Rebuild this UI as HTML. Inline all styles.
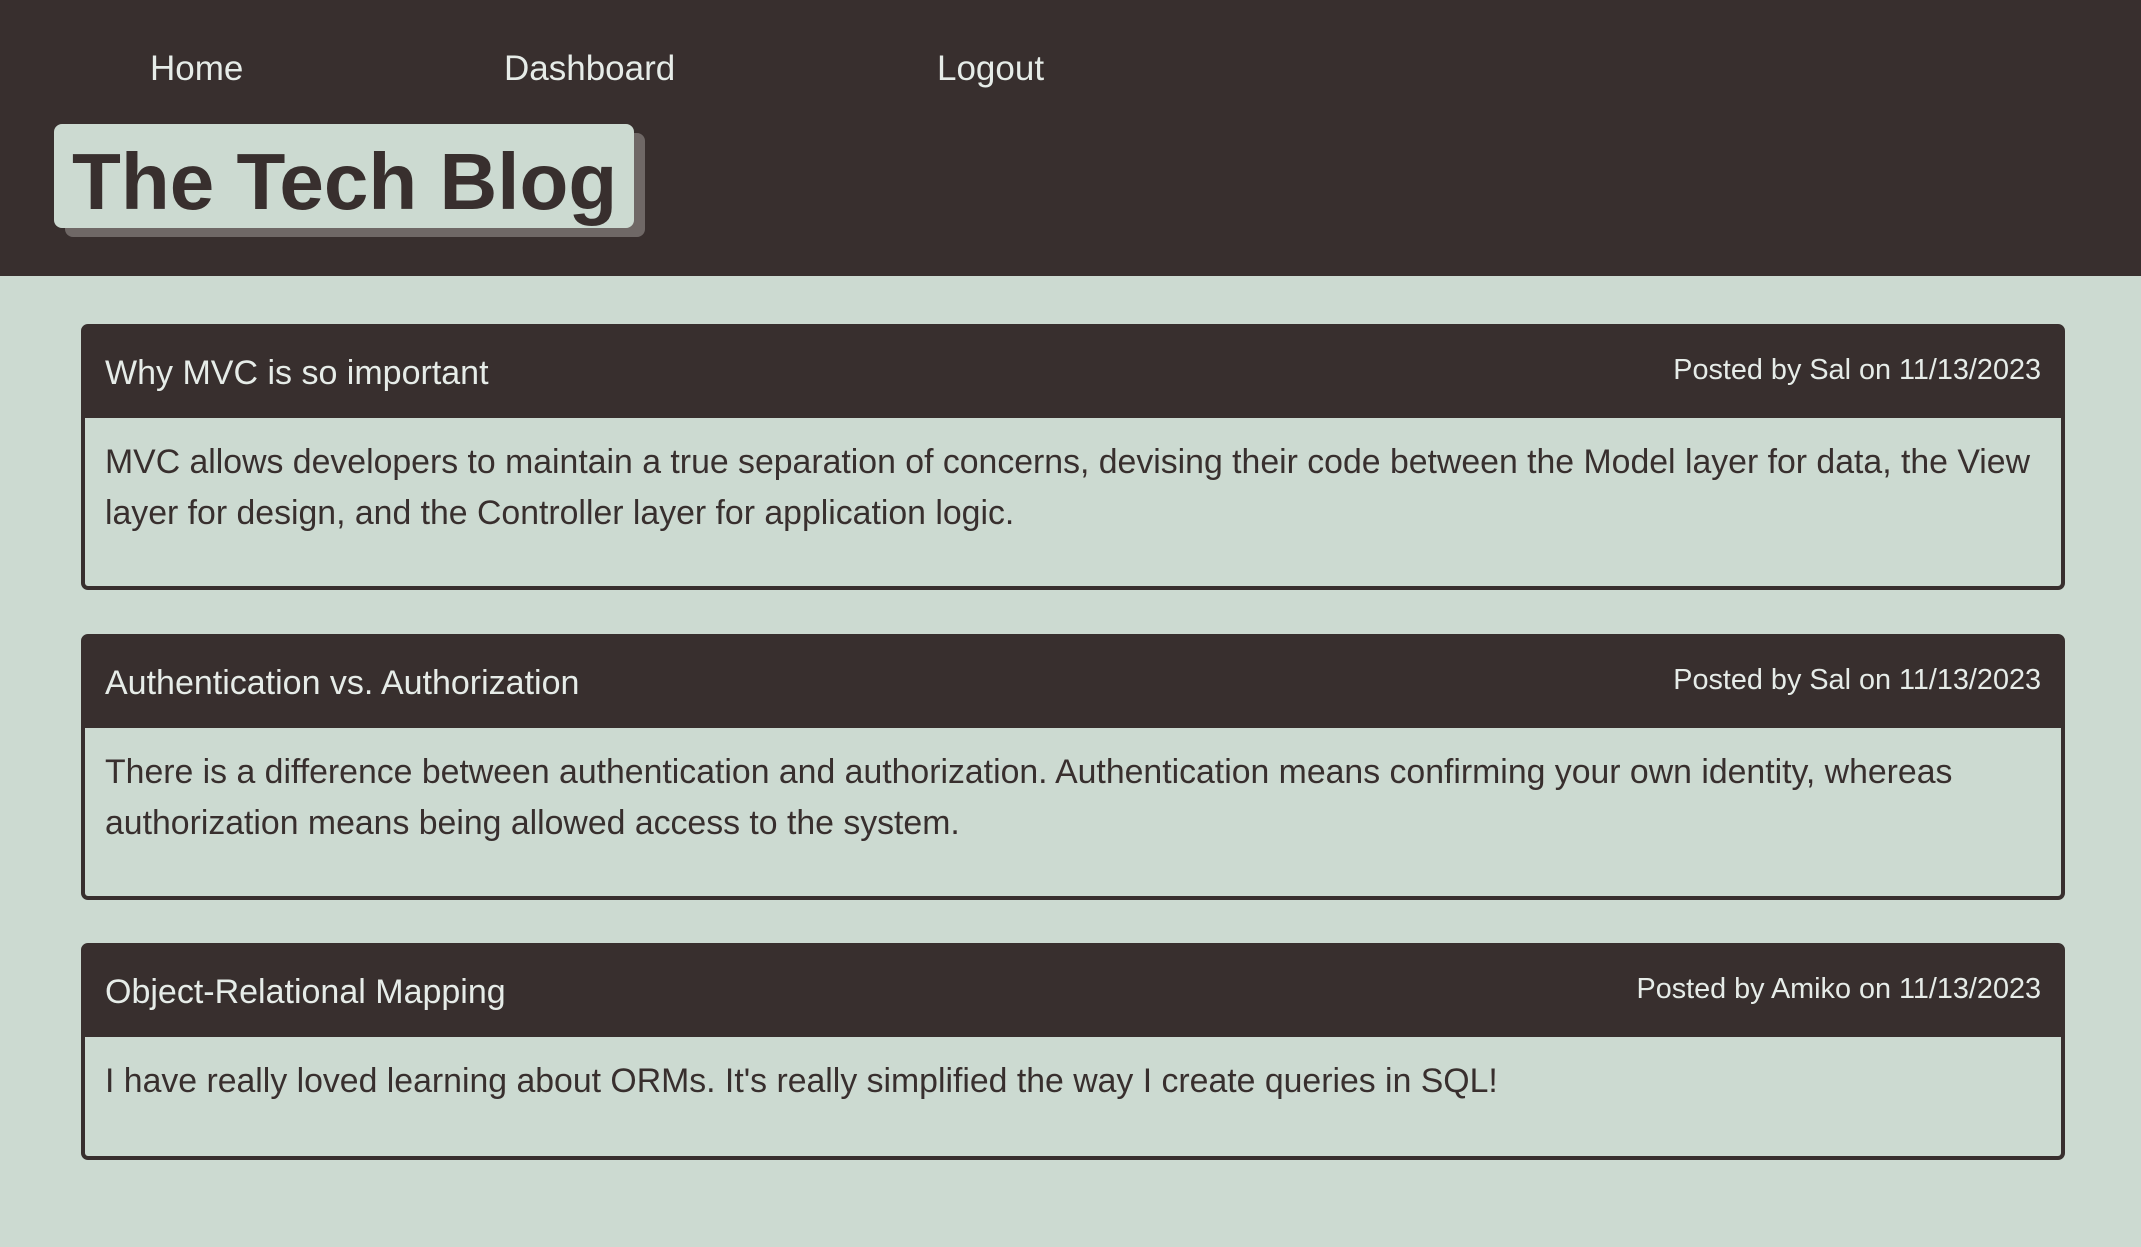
<!DOCTYPE html>
<html><head><meta charset="utf-8"><style>
*{box-sizing:border-box;margin:0;padding:0}
body{width:2141px;height:1247px;background:#ccdad1;font-family:"Liberation Sans",sans-serif;color:#382f2e;overflow:hidden}
header{position:absolute;left:0;top:0;width:2141px;height:276px;background:#382f2e}
nav a{position:absolute;top:49px;font-size:35px;color:#e6ece8;text-decoration:none}
.title{position:absolute;left:54px;top:124px;width:580px;height:104px;background:#ccdad1;border-radius:8px;box-shadow:11px 9px 0 #6f6866}
.title span{position:absolute;left:18px;top:12px;font-size:80px;font-weight:bold;color:#382f2e}
.card{position:absolute;left:81px;width:1984px;border:4px solid #382f2e;border-radius:7px;background:#ccdad1}
.card .h{height:90px;background:#382f2e;color:#e6ece8;position:relative}
.card .h .t{position:absolute;left:20px;top:26px;font-size:34px}
.card .h .p{position:absolute;right:20px;top:26px;font-size:28.8px}
.card .b{padding:19px 20px 0 20px;font-size:33.8px;line-height:51px}
</style></head><body>
<header>
<nav><a style="left:150px">Home</a><a style="left:504px">Dashboard</a><a style="left:937px">Logout</a></nav>
<div class="title"><span>The Tech Blog</span></div>
</header>
<div class="card" style="top:324px;height:266px"><div class="h"><span class="t">Why MVC is so important</span><span class="p">Posted by Sal on 11/13/2023</span></div><div class="b">MVC allows developers to maintain a true separation of concerns, devising their code between the Model layer for data, the View layer for design, and the Controller layer for application logic.</div></div>
<div class="card" style="top:634px;height:266px"><div class="h"><span class="t">Authentication vs. Authorization</span><span class="p">Posted by Sal on 11/13/2023</span></div><div class="b">There is a difference between authentication and authorization. Authentication means confirming your own identity, whereas authorization means being allowed access to the system.</div></div>
<div class="card" style="top:943px;height:217px"><div class="h"><span class="t">Object-Relational Mapping</span><span class="p">Posted by Amiko on 11/13/2023</span></div><div class="b">I have really loved learning about ORMs. It's really simplified the way I create queries in SQL!</div></div>
</body></html>
